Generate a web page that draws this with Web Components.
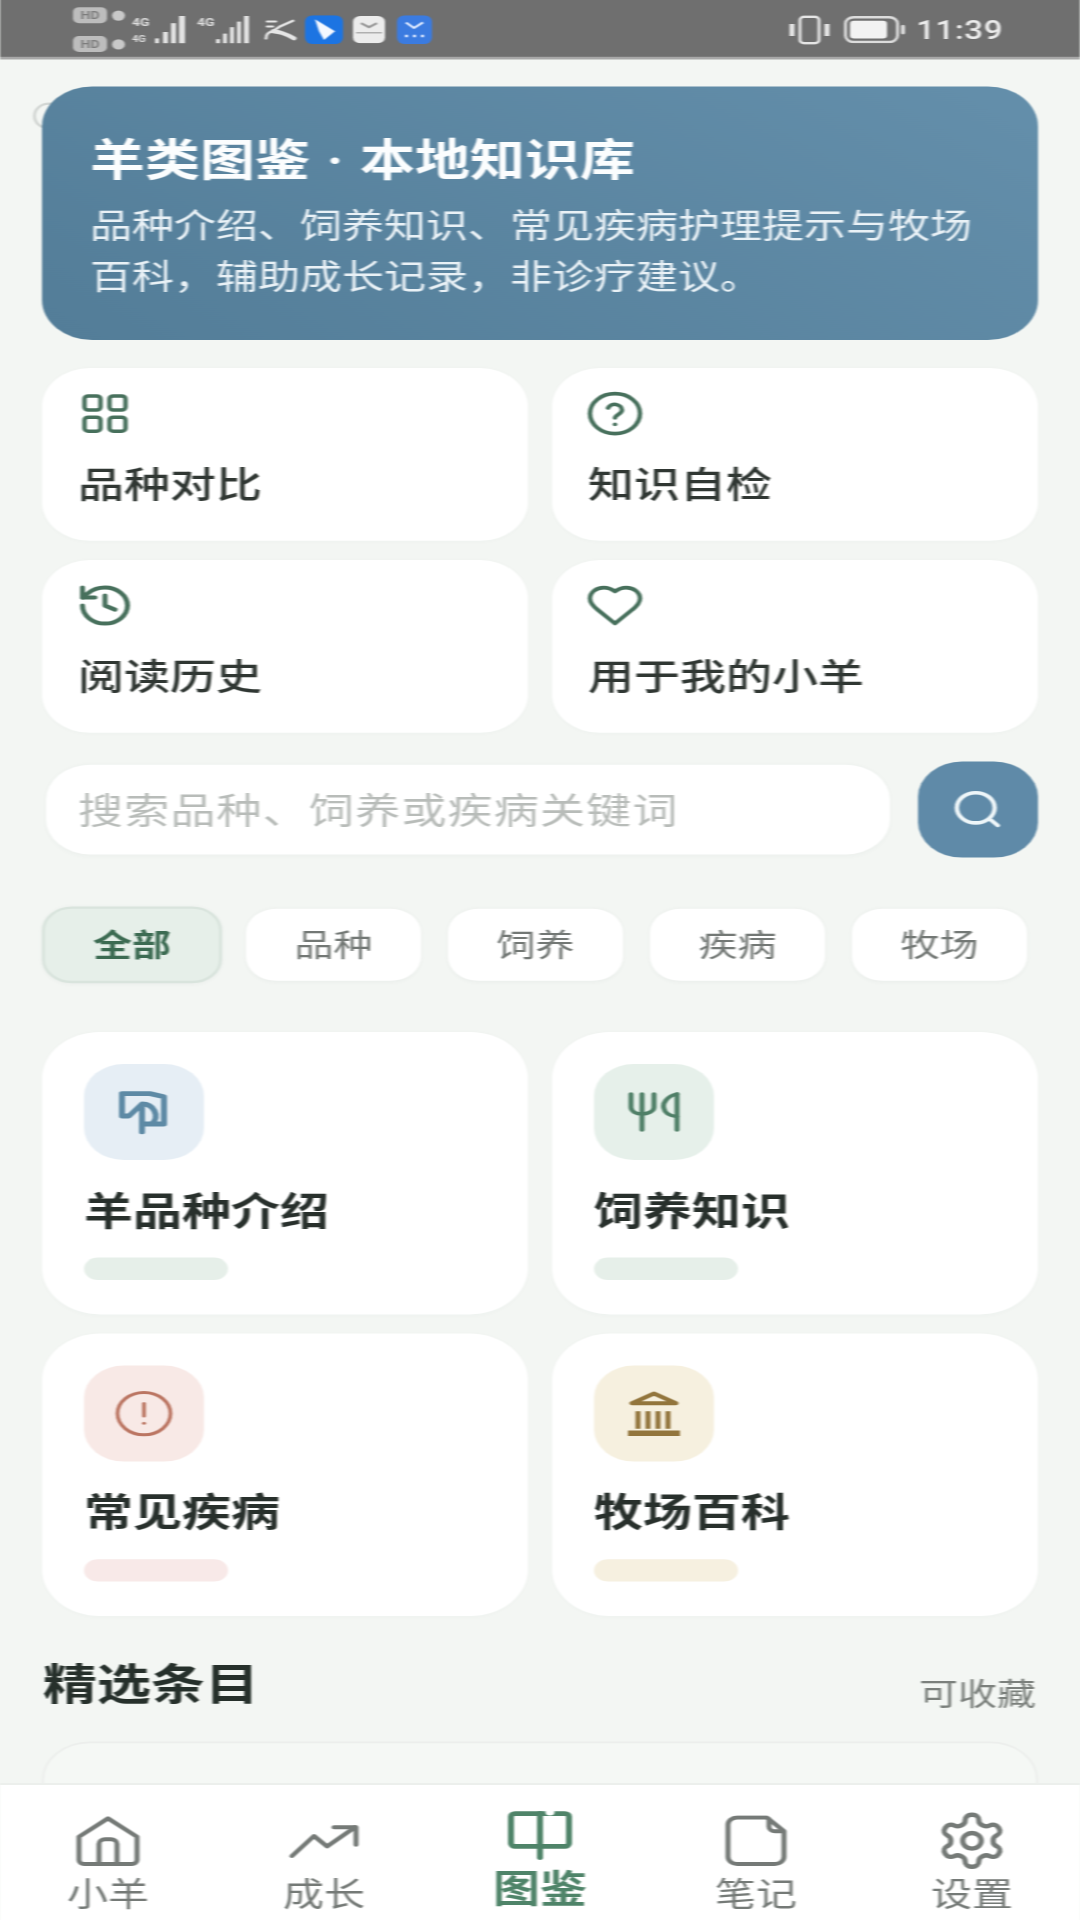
<!DOCTYPE html>
<html lang="zh-CN">
<head>
<meta charset="utf-8">
<title>羊类图鉴</title>
<style>
  html, body { margin: 0; height: 1920px; overflow: hidden; background: #f3f6f3; }
  body { font-family: "Noto Sans CJK SC", "Noto Sans", sans-serif; }
</style>
</head>
<body>
<phone-stage>
  <status-bar></status-bar>
  <page-body>
    <hero-banner>
      <span slot="title">羊类图鉴 · 本地知识库</span>
      品种介绍、饲养知识、常见疾病护理提示与牧场百科，辅助成长记录，非诊疗建议。
    </hero-banner>
    <card-grid kind="quick">
      <quick-card icon="grid">品种对比</quick-card>
      <quick-card icon="help">知识自检</quick-card>
      <quick-card icon="history">阅读历史</quick-card>
      <quick-card icon="heart">用于我的小羊</quick-card>
    </card-grid>
    <search-bar placeholder="搜索品种、饲养或疾病关键词"></search-bar>
    <chip-row>
      <filter-chip active>全部</filter-chip>
      <filter-chip>品种</filter-chip>
      <filter-chip>饲养</filter-chip>
      <filter-chip>疾病</filter-chip>
      <filter-chip>牧场</filter-chip>
    </chip-row>
    <card-grid kind="topic">
      <topic-card icon="breed" tone="blue">羊品种介绍</topic-card>
      <topic-card icon="food" tone="green">饲养知识</topic-card>
      <topic-card icon="alert" tone="red">常见疾病</topic-card>
      <topic-card icon="bank" tone="yellow">牧场百科</topic-card>
    </card-grid>
    <section-head note="可收藏">精选条目</section-head>
    <entry-card></entry-card>
  </page-body>
  <bottom-nav>
    <nav-item icon="home">小羊</nav-item>
    <nav-item icon="trend">成长</nav-item>
    <nav-item icon="book" active>图鉴</nav-item>
    <nav-item icon="note">笔记</nav-item>
    <nav-item icon="gear">设置</nav-item>
  </bottom-nav>
</phone-stage>

<script>
// the screenshot is a 1080x2400 phone capture squeezed to 1920 high,
// so everything is laid out at 2400 and phone-stage scales it down
const ICONS = {
  grid: { w: 60, h: 60, vb: '0 0 24 24', sw: 1.8, body: '<rect x="3.8" y="3.2" width="6.4" height="7" rx="1.5"/><rect x="13.8" y="3.2" width="6.4" height="7" rx="1.5"/><rect x="3.8" y="13.8" width="6.4" height="7" rx="1.5"/><rect x="13.8" y="13.8" width="6.4" height="7" rx="1.5"/>' },
  help: { w: 60, h: 60, vb: '0 0 24 24', sw: 1.8, body: '<circle cx="12" cy="12" r="10"/><path d="M9.2 9.2a2.9 2.9 0 0 1 5.6 1c0 1.9-2.8 2.6-2.8 4"/><path d="M12 17.4h.01"/>' },
  history: { w: 60, h: 60, vb: '0 0 24 24', sw: 2, body: '<path d="M3 12a9 9 0 1 0 9-9 9.75 9.75 0 0 0-6.74 2.74L3 8"/><path d="M3 3v5h5"/><path d="M12 7v5l4 2"/>' },
  heart: { w: 60, h: 60, vb: '0 0 24 24', sw: 1.8, body: '<path d="M19 14c1.49-1.46 3-3.21 3-5.5A5.5 5.5 0 0 0 16.5 3c-1.76 0-3 .5-4.5 2-1.5-1.5-2.74-2-4.5-2A5.5 5.5 0 0 0 2 8.5c0 2.3 1.5 4.05 3 5.5l7 7Z"/>' },
  search: { w: 54, h: 54, vb: '0 0 24 24', sw: 2, body: '<circle cx="11" cy="11" r="8.4"/><path d="m17.2 17.2 3.6 3.6"/>' },
  breed: { w: 50, h: 56, vb: '-3 -3 50 56', sw: 6, body: '<path d="M20 40h22V6L28 2H0v28h7l13-15c12 0 18 15 10 25"/><path d="M20 20v30"/>' },
  food: { w: 54, h: 50, vb: '-2 -3 54 60', sw: 5, body: '<path d="M2 0v20c0 6 5 10 11 10s12-4 12-10V0"/><path d="M13 0v54"/><path d="M48 0v54"/><path d="M48 0c-10 3-15 14-13 22 1 8 7 11 13 12"/>' },
  alert: { w: 60, h: 60, vb: '0 0 24 24', sw: 1.5, body: '<circle cx="12" cy="12" r="10.6"/><path d="M12 7v6.2"/><path d="M12 16.8h.01"/>' },
  bank: { w: 54, h: 58, vb: '-1 -1 54 58', sw: 5, body: '<path d="M26 3 4 15h44Z"/><path d="M10 25v22M20 25v22M30 25v22M40 25v22" stroke-linecap="butt"/><path d="M0 52.500h52" stroke-width="7" stroke-linecap="butt"/>' },
  home: { w: 66, h: 66, vb: '0 0 66 66', sw: 5, body: '<path d="M33 5 62 28v29a5 5 0 0 1-5 5H9a5 5 0 0 1-5-5V28Z"/><path d="M24 62V37a6 6 0 0 1 6-6h6a6 6 0 0 1 6 6v25"/>' },
  trend: { w: 72, h: 44, vb: '0 0 72 44', sw: 5, body: '<path d="m4 41 22-25 13 13 28-24"/><path d="M46 5h22v22"/>' },
  book: { w: 70, h: 66, vb: '0 0 70 66', sw: 6, body: '<path d="M35 7H10a4 4 0 0 0-4 4v33a4 4 0 0 0 4 4h25"/><path d="M35 7h25a4 4 0 0 1 4 4v33a4 4 0 0 1-4 4H35"/><path d="M35 7v55"/><circle cx="45" cy="5" r="4.500" fill="#fff" stroke="none"/>' },
  note: { w: 62, h: 64, vb: '0 0 62 64', sw: 5, body: '<path d="M12 3h30l17 17v32a9 9 0 0 1-9 9H12a9 9 0 0 1-9-9V12a9 9 0 0 1 9-9Z"/><path d="M44 5v9a6 6 0 0 0 6 6h8"/>' },
  gear: { w: 74, h: 78, vb: '0 0 24 24', sw: 1.7, body: '<path d="M12.22 2h-.44a2 2 0 0 0-2 2v.18a2 2 0 0 1-1 1.73l-.43.25a2 2 0 0 1-2 0l-.15-.08a2 2 0 0 0-2.73.73l-.22.38a2 2 0 0 0 .73 2.73l.15.1a2 2 0 0 1 1 1.72v.51a2 2 0 0 1-1 1.74l-.15.09a2 2 0 0 0-.73 2.73l.22.38a2 2 0 0 0 2.73.73l.15-.08a2 2 0 0 1 2 0l.43.25a2 2 0 0 1 1 1.73V20a2 2 0 0 0 2 2h.44a2 2 0 0 0 2-2v-.18a2 2 0 0 1 1-1.73l.43-.25a2 2 0 0 1 2 0l.15.08a2 2 0 0 0 2.73-.73l.22-.39a2 2 0 0 0-.73-2.73l-.15-.08a2 2 0 0 1-1-1.74v-.5a2 2 0 0 1 1-1.74l.15-.09a2 2 0 0 0 .73-2.73l-.22-.38a2 2 0 0 0-2.73-.73l-.15.08a2 2 0 0 1-2 0l-.43-.25a2 2 0 0 1-1-1.73V4a2 2 0 0 0-2-2z"/><circle cx="12" cy="12" r="3"/>' }
};

customElements.define('app-icon',
  class AppIcon extends HTMLElement {
    connectedCallback() {
      const shadow = this.attachShadow({ mode: 'open' });
      const i = ICONS[this.getAttribute('name')];
      shadow.innerHTML = `
        <style>
          :host { display: block; line-height: 0; width: ${i.w}px; height: ${i.h}px; }
          svg { fill: none; stroke: currentColor; stroke-linecap: round; stroke-linejoin: round; }
        </style>
        <svg width="${i.w}" height="${i.h}" viewBox="${i.vb}" preserveAspectRatio="none" stroke-width="${i.sw}">${i.body}</svg>
      `;
    }
  }
);

customElements.define('phone-stage',
  class PhoneStage extends HTMLElement {
    constructor() {
      super();
      this.attachShadow({ mode: 'open' }).innerHTML = `
        <style>
          :host {
            display: flex;
            flex-direction: column;
            width: 1080px;
            height: 2400px;
            margin-bottom: -480px;
            background: #f3f6f3;
            transform: scaleY(0.8);
            transform-origin: 0 0;
            filter: blur(0.9px);
            overflow: hidden;
          }
        </style>
        <slot></slot>
      `;
    }
  }
);

customElements.define('status-bar',
  class StatusBar extends HTMLElement {
    constructor() {
      super();
      this.attachShadow({ mode: 'open' }).innerHTML = `
        <style>
          :host {
            display: flex;
            align-items: center;
            justify-content: space-between;
            flex: none;
            height: 74px;
            box-sizing: border-box;
            padding: 3px 77px 0 73px;
            background: #6f6f6f;
            color: #e6e6e6;
            font-family: Roboto, sans-serif;
            border-bottom: 3px solid #a8a8a8;
          }
          .left, .right { display: flex; align-items: center; }
          .hd { display: flex; flex-direction: column; gap: 16px; margin-right: 7px; }
          .hd div { display: flex; align-items: center; gap: 5px; }
          .hd b {
            width: 34px; height: 20px; box-sizing: border-box;
            border-radius: 6px; background: #bdbdbd; color: #7d7d7d;
            font-size: 14px; line-height: 20px; text-align: center; font-weight: 700;
          }
          .hd i { width: 13px; height: 13px; border-radius: 50%; background: #c9c9c9; }
          svg { display: block; }
          .time { font-size: 33px; font-weight: 500; letter-spacing: 0.6px; margin-left: 11px; color: #ececec; }
          text { font: 700 14px Roboto, sans-serif; fill: #dedede; }
        </style>
        <div class="left">
          <div class="hd">
            <div><b>HD</b><i></i></div>
            <div><b>HD</b><i></i></div>
          </div>
          <svg width="54" height="36" viewBox="0 0 54 36" fill="#e2e2e2">
            <text x="0" y="13">4G</text><text x="0" y="33" style="font-size:11px">4G</text>
            <rect x="23" y="29" width="4" height="6"/><rect x="31" y="21" width="5" height="14"/><rect x="39" y="10" width="5" height="25"/><rect x="47" y="1" width="6" height="34"/>
          </svg>
          <svg style="margin-left:11px" width="53" height="36" viewBox="0 0 53 36" fill="#e2e2e2">
            <text x="0" y="13">4G</text>
            <rect x="19" y="30" width="4" height="5"/><rect x="26" y="23" width="4" height="12"/><rect x="33" y="15" width="4" height="20"/><rect x="40" y="8" width="4" height="27"/><rect x="47" y="1" width="5" height="34"/>
          </svg>
          <svg style="margin-left:13px" width="34" height="30" viewBox="0 0 34 30" fill="none" stroke="#e6e6e6" stroke-linecap="round">
            <path d="M3 26c0-6 3-8 7-9l7-6 13-7" stroke-width="3"/>
            <path d="M10 17c6 1 11 2 21 9" stroke-width="5"/>
            <path d="M4 5h9M4 11h6" stroke-width="2.500"/>
          </svg>
          <svg style="margin-left:8px" width="38" height="36" viewBox="0 0 38 36">
            <rect width="38" height="36" rx="8" fill="#1c74e2"/>
            <path d="M10 5 30 20 19 31 14 20Z" fill="#f4f8ff"/>
          </svg>
          <svg style="margin-left:10px" width="32" height="34" viewBox="0 0 32 34">
            <rect width="32" height="34" rx="7" fill="#ececec"/>
            <path d="M8 9l8 5 8-5" fill="none" stroke="#999" stroke-width="2.500"/>
            <path d="M3 21h26" stroke="#b0b0b0" stroke-width="2"/>
          </svg>
          <svg style="margin-left:12px" width="35" height="36" viewBox="0 0 35 36">
            <rect width="35" height="36" rx="8" fill="#3b7be0"/>
            <path d="M9 9l8 7 9-7" fill="none" stroke="#dfeaff" stroke-width="2.500"/>
            <path d="M8 26h3M16 26h3M24 26h3" stroke="#dfeaff" stroke-width="3"/>
          </svg>
        </div>
        <div class="right">
          <svg width="41" height="37" viewBox="0 0 41 37" fill="none" stroke="#e6e6e6">
            <rect x="11" y="2" width="19" height="33" rx="4" stroke-width="3"/>
            <path d="M3 11v15M38 11v15" stroke-width="5"/>
          </svg>
          <svg style="margin-left:14px" width="61" height="34" viewBox="0 0 61 34">
            <rect x="1.500" y="1.500" width="52" height="31" rx="8" fill="none" stroke="#dcdcdc" stroke-width="3"/>
            <rect x="6" y="6" width="37" height="22" rx="4" fill="#f2f2f2"/>
            <rect x="57" y="11" width="4" height="12" rx="2" fill="#dcdcdc"/>
          </svg>
          <span class="time">11:39</span>
        </div>
      `;
    }
  }
);

customElements.define('page-body',
  class PageBody extends HTMLElement {
    constructor() {
      super();
      this.attachShadow({ mode: 'open' }).innerHTML = `
        <style>
          :host {
            display: block;
            flex: 1;
            min-height: 0;
            overflow: hidden;
            box-sizing: border-box;
            padding: 34px 42px 0;
          }
        </style>
        <slot></slot>
      `;
    }
  }
);

customElements.define('hero-banner',
  class HeroBanner extends HTMLElement {
    constructor() {
      super();
      this.attachShadow({ mode: 'open' }).innerHTML = `
        <style>
          :host {
            display: block;
            position: relative;
            box-sizing: border-box;
            height: 317px;
            padding: 57px 44px 40px 48px;
            border-radius: 50px;
            background: linear-gradient(35deg, #537d98, #648fab);
            color: #e9f1f6;
            font-size: 42px;
            line-height: 64px;
          }
          .ring {
            position: absolute;
            left: -9px; top: 20px;
            width: 26px; height: 28px;
            border: 3px solid #d2d6d3;
            border-radius: 50%;
            z-index: -1;
          }
          .title {
            font-family: Roboto, "Noto Sans CJK SC", sans-serif;
            font-size: 55px;
            word-spacing: 3px;
            line-height: 72px;
            font-weight: 700;
            color: #fbfdfe;
            margin-bottom: 10px;
          }
        </style>
        <div class="ring"></div>
        <div class="title"><slot name="title"></slot></div>
        <slot></slot>
      `;
    }
  }
);

customElements.define('card-grid',
  class CardGrid extends HTMLElement {
    constructor() {
      super();
      this.attachShadow({ mode: 'open' }).innerHTML = `
        <style>
          :host { display: grid; grid-template-columns: 486px 486px; gap: 24px; }
          :host([kind="quick"]) { margin-top: 35px; }
          :host([kind="topic"]) { margin-top: 61px; }
        </style>
        <slot></slot>
      `;
    }
  }
);

customElements.define('quick-card',
  class QuickCard extends HTMLElement {
    connectedCallback() {
      this.attachShadow({ mode: 'open' }).innerHTML = `
        <style>
          :host {
            display: block;
            box-sizing: border-box;
            height: 216px;
            padding: 27px 30px 0 36px;
            background: #fff;
            border-radius: 48px;
            box-shadow: 0 1px 5px rgba(60, 80, 70, 0.025);
            color: #303733;
            font-size: 46px;
            line-height: 60px;
            font-weight: 500;
          }
          app-icon { color: #47705c; margin: 0 0 25px -3px; }
        </style>
        <app-icon name="${this.getAttribute('icon')}"></app-icon>
        <slot></slot>
      `;
    }
  }
);

customElements.define('search-bar',
  class SearchBar extends HTMLElement {
    connectedCallback() {
      this.attachShadow({ mode: 'open' }).innerHTML = `
        <style>
          :host {
            display: flex;
            align-items: center;
            gap: 28px;
            margin-top: 36px;
            height: 120px;
          }
          .box {
            flex: 1;
            height: 112px;
            display: flex;
            align-items: center;
            box-sizing: border-box;
            margin-left: 4px;
            padding: 0 0 3px 32px;
            background: #fff;
            border-radius: 44px;
            box-shadow: 0 1px 6px rgba(60, 80, 70, 0.04);
            color: #b8bcb9;
            font-size: 45px;
            letter-spacing: 1.2px;
          }
          .btn {
            flex: none;
            width: 120px;
            height: 120px;
            display: flex;
            align-items: center;
            justify-content: center;
            border-radius: 44px;
            background: #5f8aa8;
            color: #eef6f9;
          }
        </style>
        <div class="box">${this.getAttribute('placeholder')}</div>
        <div class="btn"><app-icon name="search"></app-icon></div>
      `;
    }
  }
);

customElements.define('chip-row',
  class ChipRow extends HTMLElement {
    constructor() {
      super();
      this.attachShadow({ mode: 'open' }).innerHTML = `
        <style>
          :host { display: flex; align-items: center; gap: 27px; margin-top: 61px; height: 96px; }
        </style>
        <slot></slot>
      `;
    }
  }
);

customElements.define('filter-chip',
  class FilterChip extends HTMLElement {
    constructor() {
      super();
      this.attachShadow({ mode: 'open' }).innerHTML = `
        <style>
          :host {
            display: flex;
            align-items: center;
            justify-content: center;
            box-sizing: border-box;
            width: 175px;
            height: 90px;
            padding-bottom: 6px;
            background: #fff;
            border-radius: 30px;
            box-shadow: 0 1px 5px rgba(60, 80, 70, 0.05);
            color: #737875;
            font-size: 39px;
          }
          :host([active]) {
            width: 180px;
            height: 96px;
            margin-right: -3px;
            background: #e6efe9;
            border: 3px solid #d9e4dd;
            color: #3c6b52;
            font-weight: 700;
          }
        </style>
        <slot></slot>
      `;
    }
  }
);

customElements.define('topic-card',
  class TopicCard extends HTMLElement {
    connectedCallback() {
      const tones = {
        blue: ['#e6eef5', '#5e8aa5', '#e6efe9'],
        green: ['#e6f0ea', '#4f7f67', '#e6efe9'],
        red: ['#f8e9e6', '#bb7562', '#f8e9e8'],
        yellow: ['#f6f0df', '#92753c', '#f6f0e0']
      };
      const t = tones[this.getAttribute('tone')];
      this.attachShadow({ mode: 'open' }).innerHTML = `
        <style>
          :host {
            display: block;
            box-sizing: border-box;
            height: 353px;
            padding: 40px 42px 0;
            background: #fff;
            border-radius: 58px;
            box-shadow: 0 1px 5px rgba(60, 80, 70, 0.025);
            color: #28302c;
            font-size: 49px;
            line-height: 64px;
            font-weight: 700;
          }
          .tile {
            width: 120px;
            height: 120px;
            display: flex;
            align-items: center;
            justify-content: center;
            border-radius: 40px;
            background: ${t[0]};
            color: ${t[1]};
            margin-bottom: 28px;
          }
          .pill {
            width: 144px;
            height: 28px;
            margin-top: 30px;
            border-radius: 14px;
            background: ${t[2]};
          }
        </style>
        <div class="tile"><app-icon name="${this.getAttribute('icon')}"></app-icon></div>
        <slot></slot>
        <div class="pill"></div>
      `;
    }
  }
);

customElements.define('section-head',
  class SectionHead extends HTMLElement {
    connectedCallback() {
      this.attachShadow({ mode: 'open' }).innerHTML = `
        <style>
          :host {
            display: flex;
            justify-content: space-between;
            align-items: baseline;
            margin-top: 46px;
            font-size: 54px;
            line-height: 72px;
            font-weight: 700;
            color: #26302b;
            padding-left: 1px;
          }
          span { font-size: 39px; font-weight: 400; color: #7b807c; margin-right: 2px; position: relative; top: 6px; }
        </style>
        <slot></slot>
        <span>${this.getAttribute('note')}</span>
      `;
    }
  }
);

customElements.define('entry-card',
  class EntryCard extends HTMLElement {
    constructor() {
      super();
      this.attachShadow({ mode: 'open' }).innerHTML = `
        <style>
          :host {
            display: block;
            height: 150px;
            margin-top: 33px;
            background: #f5f8f5;
            border: 2px solid #eceeec;
            border-radius: 48px;
          }
        </style>
      `;
    }
  }
);

customElements.define('bottom-nav',
  class BottomNav extends HTMLElement {
    constructor() {
      super();
      this.attachShadow({ mode: 'open' }).innerHTML = `
        <style>
          :host {
            display: grid;
            grid-template-columns: repeat(5, 1fr);
            flex: none;
            height: 171px;
            box-sizing: border-box;
            background: #fff;
            border-top: 2px solid #e8ebe8;
          }
        </style>
        <slot></slot>
      `;
    }
  }
);

customElements.define('nav-item',
  class NavItem extends HTMLElement {
    connectedCallback() {
      this.attachShadow({ mode: 'open' }).innerHTML = `
        <style>
          :host {
            display: flex;
            flex-direction: column;
            align-items: center;
            color: #757a77;
            font-size: 41px;
            line-height: 50px;
          }
          .ic { height: 74px; display: flex; align-items: center; justify-content: center; margin-top: 33px; }
          .txt { margin-top: 2px; }
          :host([active]) { color: #4f8469; font-size: 47px; font-weight: 700; }
          :host([active]) .ic { margin-top: 25px; }
          :host([active]) .txt { margin-top: 3px; }
        </style>
        <div class="ic"><app-icon name="${this.getAttribute('icon')}"></app-icon></div>
        <div class="txt"><slot></slot></div>
      `;
    }
  }
);
</script>
</body>
</html>
